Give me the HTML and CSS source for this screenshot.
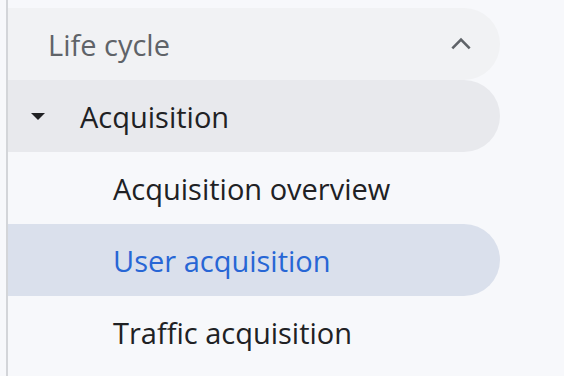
FILE: index.html
```html
<!DOCTYPE html>
<html>
<head>
    <title>Reports navigation</title>
    <link rel="stylesheet" href="styles.css">
</head>
<body>
    <nav class="sidebar">
        <div class="section-head">
            <span class="section-title">Life cycle</span>
            <svg class="chevron" width="26" height="26" viewBox="0 0 24 24">
                <path d="M4 16l8-8 8 8" fill="none" stroke="#5f6368" stroke-width="2.4"/>
            </svg>
        </div>
        <div class="group-head">
            <svg class="caret" width="16" height="16" viewBox="0 0 16 16">
                <path d="M1 5h14l-7 7z" fill="#202124"/>
            </svg>
            <span>Acquisition</span>
        </div>
        <a class="item">Acquisition overview</a>
        <a class="item active">User acquisition</a>
        <a class="item">Traffic acquisition</a>
    </nav>
</body>
</html>
```

FILE: styles.css
```css
body {
    margin: 0;
    background-color: #f7f8fb;
    font-family: "Open Sans", Roboto, Arial, sans-serif;
}
.sidebar {
    margin-left: 6px;
    padding-top: 8px;
    min-height: 368px;
    border-left: 2px solid #d3d5d9;
    width: 492px;
}
.section-head, .group-head, .item {
    display: flex;
    align-items: center;
    height: 72px;
    border-radius: 0 36px 36px 0;
    font-size: 29px;
}
.section-head {
    background-color: #f1f2f4;
    color: #5f6368;
    padding: 0 26px 0 40px;
    justify-content: space-between;
}
.group-head {
    background-color: #e8e9ed;
    color: #202124;
    padding-left: 22px;
    gap: 34px;
    font-weight: 500;
}
.item {
    color: #202124;
    padding-left: 105px;
    font-weight: 500;
}
.item.active {
    background-color: #dae0ec;
    color: #2766d5;
}
```
